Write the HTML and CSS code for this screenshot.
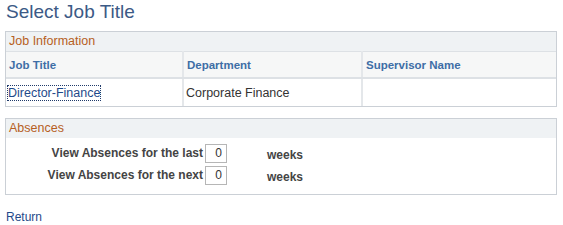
FILE: index.html
```html
<!DOCTYPE html>
<html lang="en">
<head>
    <meta charset="UTF-8">
    <title>Select Job Title</title>
    <link rel="stylesheet" href="styles.css">
</head>
<body>
    <h1 class="page-title">Select Job Title</h1>

    <div class="group-box">
        <div class="group-header">Job Information</div>
        <table class="job-grid">
            <tr>
                <th class="col-title">Job Title</th>
                <th class="col-dept">Department</th>
                <th>Supervisor Name</th>
            </tr>
            <tr>
                <td><a href="#" class="job-link">Director-Finance</a></td>
                <td>Corporate Finance</td>
                <td></td>
            </tr>
        </table>
    </div>

    <div class="group-box absences">
        <div class="group-header">Absences</div>
        <div class="absence-rows">
            <div class="absence-row">
                <label class="absence-label" for="last">View Absences for the last</label>
                <input type="text" id="last" class="weeks-input" value="0">
                <span class="weeks">weeks</span>
            </div>
            <div class="absence-row">
                <label class="absence-label" for="next">View Absences for the next</label>
                <input type="text" id="next" class="weeks-input" value="0">
                <span class="weeks">weeks</span>
            </div>
        </div>
    </div>

    <a href="#" class="return-link">Return</a>
</body>
</html>
```

FILE: styles.css
```css
body {
    margin: 0;
    padding: 0 6px 0 5px;
    background-color: #ffffff;
    font-family: Arial, "Liberation Sans", sans-serif;
    font-size: 12px;
    color: #333;
}

.page-title {
    margin: 0;
    padding: 1px 0 0 1px;
    height: 30px;
    font-size: 19px;
    font-weight: normal;
    color: #3c5a86;
}

.group-box {
    border: 1px solid #cbd0d6;
    width: 550px;
}

.group-header {
    background-color: #eff2f4;
    color: #b6601e;
    font-size: 12.5px;
    height: 19px;
    line-height: 19px;
    padding-left: 3px;
}

.job-grid {
    width: 100%;
    border-collapse: collapse;
}

.job-grid th {
    background-color: #f6f7f7;
    color: #3e6ea6;
    font-size: 11.5px;
    font-weight: bold;
    text-align: left;
    height: 25px;
    padding: 0 3px;
    border-top: 1px solid #dde1e5;
    border-bottom: 2px solid #dde1e5;
    border-right: 2px solid #e4e7ea;
}

.job-grid td {
    height: 27px;
    padding: 0 2px;
    font-size: 12.5px;
    border-right: 2px solid #e4e7ea;
}

.job-grid th:last-child,
.job-grid td:last-child {
    border-right: none;
}

.col-title {
    width: 170px;
}

.col-dept {
    width: 171px;
}

.job-link {
    color: #1f4a8a;
    text-decoration: none;
    outline: 1px dotted #1f3a6a;
    outline-offset: 0;
}

.absences {
    margin-top: 11px;
}

.absence-rows {
    padding: 4px 0 8px 0;
}

.absence-row {
    display: flex;
    align-items: center;
    height: 22px;
}

.absence-label {
    width: 197px;
    text-align: right;
    font-weight: bold;
    color: #444;
    padding-right: 2px;
}

.weeks-input {
    width: 12px;
    height: 17px;
    border: 1px solid #b6b6b6;
    padding: 0 4px;
    font-family: Arial, "Liberation Sans", sans-serif;
    font-size: 12px;
    text-align: right;
    color: #333;
}

.weeks {
    margin-left: 40px;
    margin-top: 4px;
    font-weight: bold;
    color: #444;
}

.return-link {
    display: inline-block;
    margin-top: 15px;
    margin-left: 1px;
    color: #1f4a8a;
    text-decoration: none;
}
```
